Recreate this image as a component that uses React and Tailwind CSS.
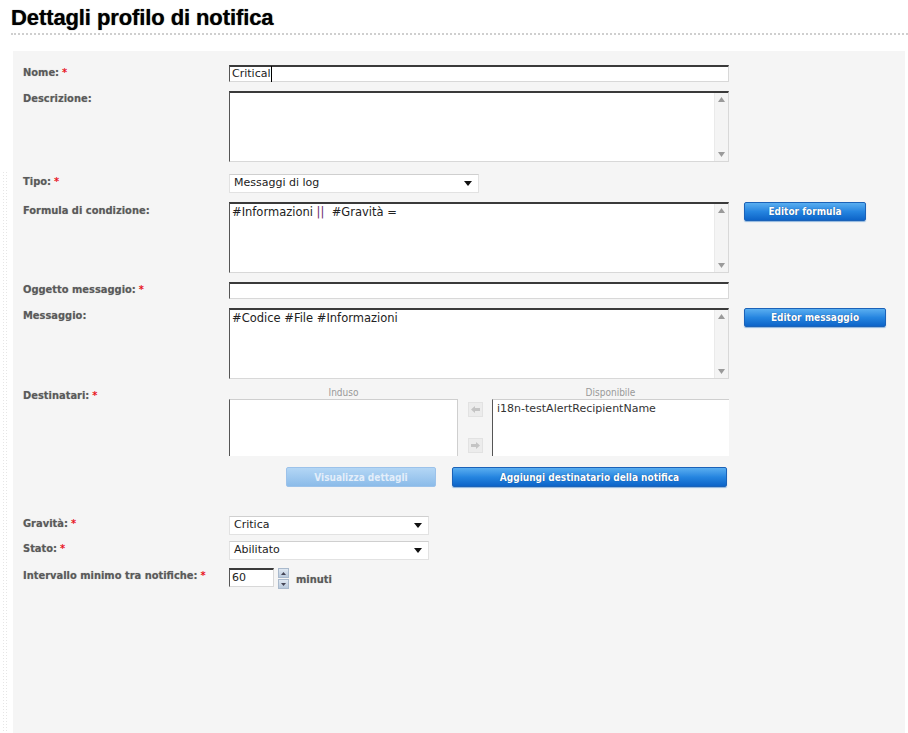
import React from 'react';

const Req = () => <span className="text-[#e8141d] ml-[3px] [text-shadow:none]">*</span>;

const Label = ({ children, req, className = '' }) => (
  <div className={`w-[206px] shrink-0 text-[11px] leading-[13px] font-bold text-[#5a5a5a] [text-shadow:0_0_1px_#b8b8b8] font-['DejaVu_Sans_Condensed',Tahoma,sans-serif] ${className}`}>
    {children}
    {req && <Req />}
  </div>
);

const Input = ({ value, className = 'w-[500px]' }) => (
  <div className={`h-[17px] bg-white border border-[#d8d8d8] border-t-2 border-t-[#3a3a3a] border-l-[#555] flex items-center px-[2px] text-[11px] text-[#222] ${className}`}>
    {value}
  </div>
);

const Scroll = () => (
  <div className="w-[14px] shrink-0 flex flex-col justify-between items-center py-[4px] bg-[#f4f4f4] border-l border-[#eaeaea]">
    <svg width="7" height="5" viewBox="0 0 7 5"><path d="M0 5 L3.5 0 L7 5 Z" fill="#9a9a9a" /></svg>
    <svg width="7" height="5" viewBox="0 0 7 5"><path d="M0 0 L3.5 5 L7 0 Z" fill="#9a9a9a" /></svg>
  </div>
);

const TextArea = ({ value }) => (
  <div className="h-[71px] w-[500px] bg-white border border-[#d8d8d8] border-t-2 border-t-[#3a3a3a] border-l-[#555] flex">
    <div className="flex-1 px-[2px] pt-[1px] text-[11.5px] text-[#222] leading-[14px] whitespace-pre">{value}</div>
    <Scroll />
  </div>
);

const Caret = () => (
  <svg width="8" height="5" viewBox="0 0 8 5"><path d="M0 0 H8 L4 5 Z" fill="#111" /></svg>
);

const Select = ({ value, className }) => (
  <div className={`h-[19px] bg-white border border-[#e2e2e2] border-t-[#cfcfcf] flex items-center justify-between pl-[4px] pr-[6px] text-[11px] text-[#222] ${className}`}>
    <span>{value}</span>
    <Caret />
  </div>
);

const BlueButton = ({ children, className = '' }) => (
  <button className={`h-[19px] rounded-[2px] border border-[#1b62b8] bg-gradient-to-b from-[#59aef0] via-[#2585e0] to-[#0d64c8] text-white text-[10px] font-bold font-['DejaVu_Sans_Condensed',Tahoma,sans-serif] [text-shadow:0_0_1px_#0a3f80] shadow-[0_1px_1px_#8fb6de] ${className}`}>
    {children}
  </button>
);

const ArrowBtn = ({ dir }) => (
  <div className="w-[15px] h-[15px] bg-[#ececec] border border-[#e2e2e2] flex items-center justify-center">
    <svg width="9" height="7" viewBox="0 0 9 7">
      {dir === 'left' ? (
        <path d="M0 3.5 L4 0 V2 H9 V5 H4 V7 Z" fill="#c4c4c4" />
      ) : (
        <path d="M9 3.5 L5 0 V2 H0 V5 H5 V7 Z" fill="#c4c4c4" />
      )}
    </svg>
  </div>
);

const Spin = ({ up }) => (
  <div className="w-[11px] h-[10px] bg-gradient-to-b from-[#dfe8f2] to-[#b9c9dc] border border-[#a9b9cc] flex items-center justify-center">
    <svg width="5" height="3" viewBox="0 0 5 3">
      <path d={up ? 'M0 3 L2.5 0 L5 3 Z' : 'M0 0 L2.5 3 L5 0 Z'} fill="#445" />
    </svg>
  </div>
);

export default function App() {
  return (
    <div className="w-[908px] h-[733px] bg-white overflow-hidden flex flex-col font-['DejaVu_Sans',Verdana,sans-serif]">
      <div className="pl-[11px] pt-[5px]">
        <h1 className="font-['Liberation_Sans',Arial,sans-serif] font-bold text-[22px] leading-[25px] text-black [text-shadow:0_0_1px_#555] tracking-[-0.1px]">
          Dettagli profilo di notifica
        </h1>
        <div className="mt-[3px] border-t-2 border-dotted border-[#cfcfcf]" />
      </div>

      <div className="flex flex-1 mt-[16px]">
        <div className="w-[13px] shrink-0 pl-[2px] pt-[120px]">
          <div className="w-[7px] h-full bg-[radial-gradient(#e6e6e6_1px,transparent_1px)] bg-[length:3px_3px]" />
        </div>

        <div className="flex-1 mr-[3px] bg-[#f5f5f5] pl-[10px] pt-[14px] flex flex-col">
          <div className="flex items-start">
            <Label className="pt-[1px]" req>Nome:</Label>
            <Input value={<span className="border-r border-black pr-[1px]">Critical</span>} />
          </div>

          <div className="flex items-start mt-[9px]">
            <Label className="pt-[1px]">Descrizione:</Label>
            <TextArea value="" />
          </div>

          <div className="flex items-start mt-[12px]">
            <Label className="pt-[1px]" req>Tipo:</Label>
            <Select value="Messaggi di log" className="w-[250px]" />
          </div>

          <div className="flex items-start mt-[9px]">
            <Label className="pt-[2px]">Formula di condizione:</Label>
            <TextArea
              value={
                <span>
                  #Informazioni <span className="text-[#6a2a6a]">||</span>  #Gravità =
                </span>
              }
            />
            <BlueButton className="ml-[15px] w-[122px]">Editor formula</BlueButton>
          </div>

          <div className="flex items-start mt-[9px]">
            <Label className="pt-[1px]" req>Oggetto messaggio:</Label>
            <Input value="" />
          </div>

          <div className="flex items-start mt-[9px]">
            <Label className="pt-[1px]">Messaggio:</Label>
            <TextArea value="#Codice #File #Informazioni" />
            <BlueButton className="ml-[15px] w-[142px]">Editor messaggio</BlueButton>
          </div>

          <div className="flex items-start mt-[8px]">
            <Label className="pt-[2px]" req>Destinatari:</Label>
            <div className="w-[500px] flex flex-col">
              <div className="flex items-end">
                <div className="w-[229px] flex flex-col">
                  <div className="text-center text-[10px] leading-[12px] text-[#999] font-['DejaVu_Sans_Condensed',Tahoma,sans-serif]">Induso</div>
                  <div className="h-[57px] bg-white border-l border-t border-r border-[#cfcfcf] border-l-[#555]" />
                </div>
                <div className="w-[34px] h-[57px] flex flex-col justify-between items-center py-[3px] pl-[1px]">
                  <ArrowBtn dir="left" />
                  <ArrowBtn dir="right" />
                </div>
                <div className="w-[237px] flex flex-col">
                  <div className="text-center text-[10px] leading-[12px] text-[#999] font-['DejaVu_Sans_Condensed',Tahoma,sans-serif]">Disponibile</div>
                  <div className="h-[57px] bg-white border-l border-t border-[#cfcfcf] border-l-[#555] px-[4px] pt-[2px] text-[11px] leading-[13px] text-[#333]">
                    i18n-testAlertRecipientName
                  </div>
                </div>
              </div>
              <div className="flex mt-[11px] pl-[57px] gap-[16px]">
                <button className="h-[20px] w-[150px] rounded-[2px] border border-[#9cc2ea] bg-gradient-to-b from-[#b3d6f5] to-[#8bbbe9] text-[#e3eefa] text-[10px] font-bold font-['DejaVu_Sans_Condensed',Tahoma,sans-serif]">
                  Visualizza dettagli
                </button>
                <BlueButton className="h-[20px] w-[275px]">Aggiungi destinatario della notifica</BlueButton>
              </div>
            </div>
          </div>

          <div className="flex items-start mt-[29px]">
            <Label className="pt-[1px]" req>Gravità:</Label>
            <Select value="Critica" className="w-[200px]" />
          </div>

          <div className="flex items-start mt-[6px]">
            <Label className="pt-[1px]" req>Stato:</Label>
            <Select value="Abilitato" className="w-[200px]" />
          </div>

          <div className="flex items-start mt-[8px]">
            <Label className="pt-[1px]" req>Intervallo minimo tra notifiche:</Label>
            <Input value="60" className="w-[45px] h-[19px]" />
            <div className="flex flex-col gap-[1px] ml-[4px]">
              <Spin up />
              <Spin />
            </div>
            <div className="ml-[7px] pt-[4px] text-[11px] font-bold text-[#5a5a5a] [text-shadow:0_0_1px_#b8b8b8] font-['DejaVu_Sans_Condensed',Tahoma,sans-serif]">minuti</div>
          </div>
        </div>
      </div>
    </div>
  );
}
